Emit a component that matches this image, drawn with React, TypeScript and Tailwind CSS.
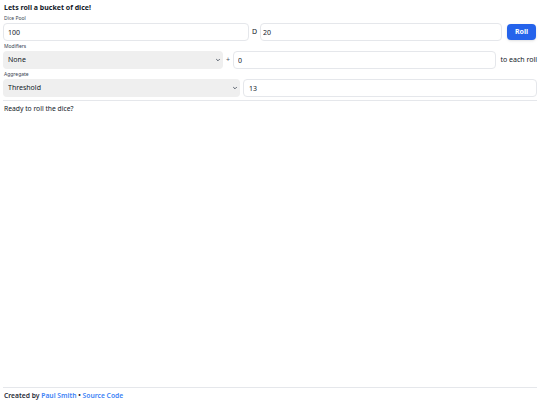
import { useState } from 'react';

function Chevron() {
  return (
    <svg
      viewBox="0 0 10 6"
      className="pointer-events-none absolute right-[3px] top-1/2 -translate-y-1/2 w-[4px] h-[3px]"
    >
      <path d="M1 1l4 4 4-4" fill="none" stroke="#374151" strokeWidth="2" strokeLinecap="round" strokeLinejoin="round" />
    </svg>
  );
}

export default function App() {
  const [pool, setPool] = useState('100');
  const [sides, setSides] = useState('20');
  const [modifier, setModifier] = useState('0');
  const [threshold, setThreshold] = useState('13');

  return (
    <div
      className="min-h-screen flex flex-col bg-white text-[#111827]"
      style={{ fontFamily: '"Noto Sans", "Open Sans", sans-serif' }}
    >
      <main className="flex-1 px-[3px] pt-[3px]">
        <h1 className="pl-[1px] text-[7px] leading-[10px] font-bold">
          Lets roll a bucket of dice!
        </h1>

        {/* Dice pool */}
        <label className="block mt-[2px] pl-[1px] text-[5px] leading-[7px] text-[#374151]">
          Dice Pool
        </label>
        <div className="mt-[1px] flex items-center gap-[3px]">
          <input
            value={pool}
            onChange={(e) => setPool(e.target.value)}
            className="flex-1 min-w-0 h-[18px] px-[4px] text-[7px] border border-[#e5e7eb] rounded-[4px] outline-none"
          />
          <span className="text-[7px]">D</span>
          <input
            value={sides}
            onChange={(e) => setSides(e.target.value)}
            className="flex-1 min-w-0 h-[18px] px-[2px] text-[7px] border border-[#e5e7eb] rounded-[4px] outline-none"
          />
          <button className="ml-[2px] mr-[1px] w-[29px] h-[16px] bg-[#2563eb] text-white text-[7px] font-bold rounded-[4px] shadow-sm">
            Roll
          </button>
        </div>

        {/* Modifiers */}
        <label className="block mt-[2px] pl-[1px] text-[5px] leading-[7px] text-[#374151]">
          Modifiers
        </label>
        <div className="mt-[1px] flex items-center">
          <div className="relative w-[220px]">
            <select className="block appearance-none w-full h-[18px] px-[5px] text-[7px] bg-[#efefef] rounded-[4px] outline-none">
              <option>None</option>
              <option>Add</option>
              <option>Subtract</option>
            </select>
            <Chevron />
          </div>
          <span className="w-[10px] text-center text-[7px] text-[#4b5563]">+</span>
          <input
            value={modifier}
            onChange={(e) => setModifier(e.target.value)}
            className="flex-1 min-w-0 h-[18px] px-[4px] text-[7px] border border-[#e5e7eb] rounded-[4px] outline-none"
          />
          <span className="pl-[4px] text-[7px] whitespace-nowrap">to each roll</span>
        </div>

        {/* Aggregate */}
        <label className="block mt-[2px] pl-[1px] text-[5px] leading-[7px] text-[#374151]">
          Aggregate
        </label>
        <div className="mt-[1px] flex items-center gap-[3px]">
          <div className="relative w-[237px]">
            <select className="block appearance-none w-full h-[18px] px-[5px] text-[7px] bg-[#efefef] rounded-[4px] outline-none">
              <option>Threshold</option>
              <option>Sum</option>
              <option>Highest</option>
            </select>
            <Chevron />
          </div>
          <input
            value={threshold}
            onChange={(e) => setThreshold(e.target.value)}
            className="flex-1 min-w-0 h-[18px] px-[5px] text-[7px] border border-[#e5e7eb] rounded-[4px] outline-none"
          />
        </div>

        <hr className="mt-[3px] border-[#e5e7eb]" />

        <p className="mt-[3px] pl-[1px] text-[6.75px] leading-[10px]">Ready to roll the dice?</p>
      </main>

      <footer className="mx-[3px] border-t border-[#e5e7eb] pt-[3px] pb-[4px] pl-[1px] text-[6.75px] leading-[10px] font-semibold text-[#1f2937]">
        Created by{' '}
        <a href="#" className="text-[#3b82f6]">
          Paul Smith
        </a>{' '}
        •{' '}
        <a href="#" className="text-[#3b82f6]">
          Source Code
        </a>
      </footer>
    </div>
  );
}
